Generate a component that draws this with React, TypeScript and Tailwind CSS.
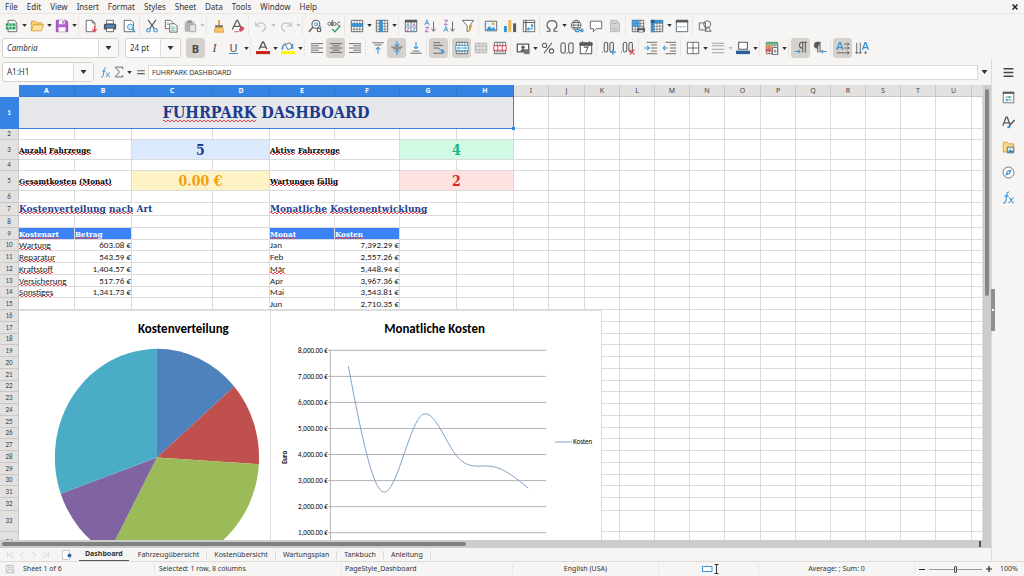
import { clsx } from 'clsx';
import type { ReactNode } from 'react';

const G = '#5b5b5b';
const B = '#3a93d2';

const alignLines = (rows: [number, number][]) =>
  rows.map(([x, w], i) => <path key={i} d={`M${x} ${3 + i * 2.5}h${w}`} stroke={G} />);

const gridIcon = (
  <>
    <path d="M1.5 1.5h13v13h-13z" fill="#fff" stroke={G} />
    <path d="M1.5 5h13M1.5 8.3h13M1.5 11.6h13M4.8 1.5v13M8 1.5v13M11.2 1.5v13" stroke={G} strokeWidth=".7" />
  </>
);

// all glyphs sit on a 16x16 grid
const icons: Record<string, ReactNode> = {
  new: (
    <>
      <path d="M3.5 1.5h7l3 3v10h-10z" fill="#fff" stroke={G} />
      <path d="M1 5h11v7H1z" fill="#2e9e62" />
      <path d="M1 8.5h11M4.5 5v7M8 5v7" stroke="#fff" strokeWidth=".8" />
    </>
  ),
  open: (
    <>
      <path d="M1.5 13.5v-11h5l1.5 2h5.5v2" fill="#f9d67a" stroke="#dd9a2e" />
      <path d="M1.5 13.5 4 6.5h11.5l-2.5 7z" fill="#fde3a0" stroke="#dd9a2e" />
    </>
  ),
  save: (
    <>
      <path d="M1.5 1.5h11l2 2v11h-13z" fill="#b261c9" stroke="#9245ab" />
      <path d="M4.5 1.5h6.5v4.500H4.5zM4 9.5h8v5H4z" fill="#fff" />
      <path d="M8.5 2.5h1.500v2.500H8.5z" fill="#9245ab" />
    </>
  ),
  pdf: (
    <>
      <path d="M2.5 1.5h7l3 3v10h-10z" fill="#fff" stroke={G} />
      <path d="M9.5 1.5v3h3" fill="none" stroke={G} />
      <path d="M12 8v6M9.5 11.5l2.500 3 2.500-3" fill="none" stroke="#e0475a" strokeWidth="1.300" />
    </>
  ),
  print: (
    <>
      <path d="M4 1.5h8v4H4z" fill="#fff" stroke={G} />
      <path d="M1 5.5h14v6.500H1z" fill="#555a5e" />
      <path d="M3.5 7h9v2.500h-9z" fill={B} />
      <path d="M4 10.5h8v4H4z" fill="#fff" stroke={G} />
    </>
  ),
  preview: (
    <>
      <path d="M2.5 1.5h8l2.500 2.500v10.500H2.5z" fill="#fff" stroke={G} />
      <circle cx="9.5" cy="9" r="3.2" fill="#d7ecfa" stroke={B} />
      <path d="m12 11.5 3 3.500" stroke={B} strokeWidth="1.5" />
    </>
  ),
  cut: (
    <>
      <path d="m3.5 1 7 10M12.5 1l-7 10" stroke={G} strokeWidth="1.3" />
      <circle cx="4" cy="12.8" r="2" fill="none" stroke={B} strokeWidth="1.3" />
      <circle cx="12" cy="12.8" r="2" fill="none" stroke={B} strokeWidth="1.3" />
    </>
  ),
  copy: (
    <>
      <path d="M1.5 1.5h6l2.500 2.500v7H1.5z" fill="#fff" stroke={G} />
      <path d="M6.5 5.5h6l2.500 2.500v7H6.5z" fill="#fff" stroke={G} />
      <path d="M8 9h5M8 11h5M8 13h5M3 4.5h3M3 6.5h3" stroke="#40a184" strokeWidth=".8" />
    </>
  ),
  paste: (
    <>
      <path d="M2 3h11v11.500H2z" fill="#b5b3b1" />
      <path d="M5 1.5h5v3H5z" fill="#8f8d8b" />
      <path d="M7.5 6.5h7v8h-7z" fill="#e4e3e1" stroke="#a5a3a1" />
    </>
  ),
  clone: (
    <>
      <path d="M8 1v6" stroke="#dd9a2e" strokeWidth="2" />
      <path d="M3.5 7h9v3h-9z" fill="#777" />
      <path d="M3.5 10h9l.5 5H3z" fill="#f7c876" stroke="#dd9a2e" />
    </>
  ),
  clear: (
    <>
      <path d="M1.5 12 6.5 1.5h1L12 11M3.5 8.5h7" fill="none" stroke={G} strokeWidth="1.5" />
      <path d="m9 12 3.500-4 3 2.500-3 3.500-2.500.5z" fill="#dc4458" />
      <path d="M4 14.5h5" stroke="#dc4458" />
    </>
  ),
  undo: <path d="M2 3v5h5M2.5 7.5C6 2.5 13 4 13 9c0 2.500-2 4.500-4 5.500" fill="none" stroke="#c4c2c0" strokeWidth="1.3" />,
  redo: <path d="M14 3v5H9M13.5 7.5C10 2.5 3 4 3 9c0 2.500 2 4.500 4 5.500" fill="none" stroke="#c4c2c0" strokeWidth="1.3" />,
  find: (
    <>
      <circle cx="9" cy="6" r="4.5" fill="#fff" stroke={G} strokeWidth="1.2" />
      <path d="m5.5 9.5-4.500 5" stroke={G} strokeWidth="1.6" />
      <circle cx="8.8" cy="6" r="1.6" fill="none" stroke={B} />
      <path d="M10.7 4v4M14.5 8v6.500" stroke={B} />
      <circle cx="12.5" cy="12.5" r="2" fill="none" stroke={G} strokeWidth="1.2" />
    </>
  ),
  spell: (
    <>
      <circle cx="2.8" cy="5.5" r="1.8" fill="none" stroke={G} />
      <path d="M5 3v5M6.5 1v7M15 4.2a2 2 0 1 0 0 2.800" fill="none" stroke={G} />
      <circle cx="8.6" cy="5.7" r="1.8" fill="none" stroke={G} />
      <path d="m6 11.5 3 3 6-6.500" fill="none" stroke="#2fa36b" strokeWidth="1.5" />
    </>
  ),
  row: (
    <>
      {gridIcon}
      <path d="M1 5h14v4H1z" fill={B} />
    </>
  ),
  column: (
    <>
      {gridIcon}
      <path d="M5 1h4v14H5z" fill={B} />
    </>
  ),
  sort: (
    <>
      <path d="M1.5 1.5h13v13h-13zM8 2v12" fill="#fff" stroke={G} />
      <path d="M1 1h14v3H1z" fill={G} />
      <path d="m3 9 1.500-4L6 9M10 10h3l-3 4h3" fill="none" stroke={B} />
      <path d="M3 10h3l-3 4h3M10 9l1.500-4L13 9" fill="none" stroke="#a857c0" />
    </>
  ),
  asc: (
    <>
      <path d="m2 7 2.500-6L7 7M3 5h3" fill="none" stroke={B} />
      <path d="M2.5 9.5h4l-4 5h4" fill="none" stroke="#a857c0" />
      <path d="M12 3v11M9.5 11l2.500 3 2.500-3" fill="none" stroke={G} />
    </>
  ),
  desc: (
    <>
      <path d="M2.5 1.5h4l-4 5h4" fill="none" stroke="#a857c0" />
      <path d="m2 14.5 2.500-6 2.500 6M3 12.5h3" fill="none" stroke={B} />
      <path d="M12 3v11M9.5 11l2.500 3 2.500-3" fill="none" stroke={G} />
    </>
  ),
  filter: (
    <>
      <path d="M1.5 1.5h13L10 7.5v5l-3 2v-7z" fill="#fff" stroke={G} />
      <path d="M12 6.5 9.5 14" stroke="#e5a33b" strokeWidth="1.8" />
    </>
  ),
  image: (
    <>
      <path d="M1.5 2.5h13v11h-13z" fill="#e6f3fc" stroke={G} />
      <path d="m2 13 4-5 3 3 2-2 3 4z" fill={B} />
      <circle cx="10.5" cy="5.5" r="1.5" fill="#e9a13a" />
    </>
  ),
  chart: (
    <>
      <path d="M1 8h3.500v7H1z" fill={B} />
      <path d="M6 1h3.500v14H6z" fill="#edb75b" />
      <path d="M11.5 5H15v10h-3.500z" fill={G} />
    </>
  ),
  pivot: (
    <>
      <path d="M1.5 1.5h13v13h-13z" fill="#fff" stroke={G} />
      <path d="M1.5 4h13M4.5 1.5v13" stroke={G} strokeWidth="1.4" />
      <path d="M6.5 11.5h5v-5M10 8l1.500-2L13 8M8 10l-2 1.500L8 13" fill="none" stroke={B} strokeWidth="1.2" />
    </>
  ),
  omega: <path d="M1.5 14h4.200v-2C3 10.5 2.3 8.5 2.3 6.8 2.3 3.8 4.8 1.8 8 1.8s5.700 2 5.700 5c0 1.700-.7 3.700-3.400 5.200v2h4.200" fill="none" stroke={G} strokeWidth="1.3" />,
  link: (
    <>
      <circle cx="7" cy="7" r="5.5" fill="#fff" stroke={G} />
      <path d="M1.5 7h11M7 1.5c-3.500 3-3.500 8 0 11M7 1.5c3.500 3 3.500 8 0 11M2.5 4h9M2.5 10h9" fill="none" stroke={G} />
      <path d="M8.5 11.5h-1a1.500 1.500 0 0 0 0 3h3M12 11.5h1.500a1.500 1.500 0 0 1 0 3H12M9.5 13h4" fill="none" stroke={B} strokeWidth="1.3" />
    </>
  ),
  comment: <path d="M1.5 2.5h13v8.500H8.5L5 14.5V11H1.5z" fill="#fff" stroke={G} />,
  headfoot: (
    <>
      <path d="M3 1.5h7l3 3v10H3z" fill="#d6d4d2" stroke="#b3b1af" />
      <path d="M5 5h5M5 11.5h6" stroke="#aaa" />
    </>
  ),
  printArea: (
    <>
      {gridIcon}
      <path d="M1 1h9v8H1z" fill={B} opacity=".85" />
      <path d="M7 10h9v4.500H7z" fill={G} />
      <path d="M9 8.5h5v2H9zM9 12.5h5V15H9z" fill="#e5f2fb" stroke={G} strokeWidth=".6" />
    </>
  ),
  freeze: (
    <>
      {gridIcon}
      <path d="M1 1h14v3.500H5V15H1z" fill={B} />
      <path d="M1 1h4v3.500H1z" fill="#1c5d91" />
    </>
  ),
  split: (
    <>
      <path d="M1.5 1.5h13v13h-13z" fill="#fff" stroke={G} />
      <path d="M1 1h14v3H1z" fill={G} />
      <path d="M3 9h10" stroke={B} strokeDasharray="2 1" />
    </>
  ),
  shapes: (
    <>
      <path d="M1.5 4.5h7v8h-7z" fill="none" stroke={G} />
      <circle cx="10.5" cy="6" r="4" fill="none" stroke={G} />
      <path d="m8 14 3.500-5 3.500 5z" fill="#f6f5f4" stroke={G} />
    </>
  ),
  fontColor: (
    <>
      <path d="m3.5 9.5 4-8.500h1l4 8.500M5 7h6" fill="none" stroke={G} strokeWidth="1.6" />
      <path d="M0 11.5h16V15H0z" fill="#c9211e" />
    </>
  ),
  highlight: (
    <>
      <path d="m5 4 5-2 3 5-5 3z" fill="#fff" stroke={G} />
      <path d="M1.5 10c0-4 1-6 4-7M13 3v6" fill="none" stroke={B} strokeWidth="1.8" />
      <path d="M0 11.5h16V15H0z" fill="#fdf600" />
    </>
  ),
  left: alignLines([[1, 14], [1, 9], [1, 14], [1, 9], [1, 14]]),
  center: alignLines([[1, 14], [4, 8], [1, 14], [4, 8], [1, 14]]),
  right: alignLines([[1, 14], [6, 9], [1, 14], [6, 9], [1, 14]]),
  top: (
    <>
      <path d="M1.5 2h13M4 4.5h8" stroke={G} />
      <path d="M8 14.5V7M5.5 9.5 8 7l2.500 2.500" fill="none" stroke={B} strokeWidth="1.2" />
    </>
  ),
  middle: (
    <>
      <path d="M1.5 7h13M3.5 9h9" stroke={G} />
      <path d="M8 0v5.500M5.5 3.5 8 6l2.500-2.500M8 16v-5.500M5.5 12.5 8 10l2.500 2.500" fill="none" stroke={B} strokeWidth="1.2" />
    </>
  ),
  bottom: (
    <>
      <path d="M4 11.5h8M1.5 14h13" stroke={G} />
      <path d="M8 1v8M5.5 6.5 8 9l2.500-2.500" fill="none" stroke={B} strokeWidth="1.2" />
    </>
  ),
  wrap: (
    <>
      <path d="M1.5 2h8M1.5 5h11M1.5 8h5M1.5 14h11" stroke={G} />
      <path d="M6 8c4 0 3 4 7.500 4.500M11.5 9.5l2.500 3-3.500 1" fill="none" stroke={B} strokeWidth="1.2" />
    </>
  ),
  merge: (
    <>
      {gridIcon}
      <path d="M1 5h14v6H1z" fill="#fff" stroke={B} />
      <path d="M3 8h10M5 6.5 3 8l2 1.500M11 6.5 13 8l-2 1.500" fill="none" stroke={B} />
    </>
  ),
  mergeCells: <path d="M1.5 2.5h13v11h-13zM1.5 6h13M1.5 10h13M6 2.5V6M10 2.5V6M6 10v3.500M10 10v3.500" fill="#e1dfdd" stroke="#b1afad" />,
  unmerge: (
    <>
      {gridIcon}
      <path d="M1 5.5h14v5H1zM5.5 5.5v5M10.5 5.5v5" fill="#fff" stroke="#d8394a" />
    </>
  ),
  currency: (
    <>
      <path d="M1.5 3.5h13v9h-13z" fill="#fff" stroke={G} strokeWidth="1.5" />
      <circle cx="8" cy="7" r="2" fill={G} />
      <path d="M5 12c0-4 6-4 6 0z" fill={G} />
      <path d="M9 9.5h6.500V15H9z" fill="#77736f" />
    </>
  ),
  percent: (
    <>
      <path d="M12.5 2 3.5 14" stroke={G} strokeWidth="1.2" />
      <circle cx="4" cy="5" r="2.5" fill="none" stroke={G} strokeWidth="1.2" />
      <circle cx="12" cy="11.5" r="2.5" fill="none" stroke={G} strokeWidth="1.2" />
    </>
  ),
  number: (
    <>
      <rect x="1" y="2" width="5" height="12" rx="2.5" fill="none" stroke={G} strokeWidth="1.2" />
      <rect x="10" y="2" width="5" height="12" rx="2.5" fill="none" stroke={G} strokeWidth="1.2" />
      <path d="M7.5 13h1.200v1.500H7.5z" fill={G} />
    </>
  ),
  date: (
    <>
      <path d="M1.5 2.5h13v12h-13z" fill="#fff" stroke={G} strokeWidth="1.2" />
      <path d="M1 2h14v3H1zM4 0v2M12 0v2" fill={G} stroke={G} />
      <path d="M5.5 7h5L7.5 13" fill="none" stroke={G} strokeWidth="1.2" />
    </>
  ),
  addDecimal: (
    <>
      <rect x="2.5" y="1.5" width="4" height="11" rx="2" fill="none" stroke={G} strokeWidth="1.2" />
      <rect x="9" y="1.5" width="4" height="11" rx="2" fill="none" stroke={G} strokeWidth="1.2" />
      <path d="M0 12h1v1H0z" fill={G} />
      <path d="M12.5 9.5V16M9.5 12.7H16" stroke={B} strokeWidth="1.3" />
    </>
  ),
  removeDecimal: (
    <>
      <rect x="2.5" y="1.5" width="4" height="11" rx="2" fill="none" stroke={G} strokeWidth="1.2" />
      <rect x="9" y="1.5" width="4" height="11" rx="2" fill="none" stroke={G} strokeWidth="1.2" />
      <path d="M0 12h1v1H0z" fill={G} />
      <path d="m10 10 5.500 5.500m0-5.500L10 15.5" stroke="#e0475a" strokeWidth="1.3" />
    </>
  ),
  indent: (
    <>
      <path d="M3 1.5h12M8 4.5h7M8 8h7M8 11.5h7M3 14.5h12" stroke={G} />
      <path d="M0 8h5.500M3.5 5.5 6 8l-2.500 2.500" fill="none" stroke={B} strokeWidth="1.2" />
    </>
  ),
  outdent: (
    <>
      <path d="M3 1.5h12M8 4.5h7M8 8h7M8 11.5h7M3 14.5h12" stroke={G} />
      <path d="M.5 8H6M2.5 5.5 0 8l2.500 2.500" fill="none" stroke={B} strokeWidth="1.2" />
    </>
  ),
  borders: <path d="M1.5 1.5h13v13h-13zM8 1.5v13M1.5 8h13" fill="#fff" stroke={G} />,
  lineStyle: <path d="M1 2.5h14M1 5.5h14M1 9.5h14M1 13.5h14" stroke="#a3a19f" strokeWidth="1.2" />,
  borderColor: (
    <>
      <path d="M3 1.5h10v8H3z" fill="#fff" stroke={G} strokeWidth="1.2" />
      <path d="M0 11h16v4H0z" fill="#2a6099" />
    </>
  ),
  conditional: (
    <>
      {gridIcon}
      <path d="M1 1.5h13v2.500H1z" fill="#59b578" />
      <path d="M1 5h6v3.500H1z" fill="#ea8c55" />
      <path d="M1 9h6v3H1z" fill="#dd5863" />
      <path d="M8.5 7.5h6v8h-6z" fill="#fff" stroke={G} />
      <path d="M10 10.5h3M10 12.5h3" stroke={G} />
    </>
  ),
  ltr: (
    <>
      <path d="M15 1.5H9.5a3 3 0 0 0 0 6.500M10 1.5V13M13 1.5V13" fill="none" stroke={G} strokeWidth="1.2" />
      <path d="M1 12h6M5 10l2 2-2 2" fill="none" stroke={B} strokeWidth="1.2" />
    </>
  ),
  rtl: (
    <>
      <path d="M8.5 1.5H5A3 3 0 0 0 5 8M5.5 1.5V13M8 1.5V13" fill={G} stroke={G} strokeWidth="1.2" />
      <path d="M15.5 12h-6M11.5 10l-2 2 2 2" fill="none" stroke={B} strokeWidth="1.2" />
    </>
  ),
  textLr: (
    <>
      <path d="M1 10 4 2h1l3 8M2.5 7.5h4" fill="none" stroke={B} strokeWidth="1.5" />
      <path d="M9.5 3.5H15M9.5 8H15M1 13.5h14M13 2l2 1.500L13 5M13 6.5 15 8l-2 1.500M13 12l2 1.500-2 1.500" fill="none" stroke={G} />
    </>
  ),
  textTb: (
    <>
      <path d="m8.5 10 3-8h.8l3 8M9.8 7.5h4.200" fill="none" stroke={B} strokeWidth="1.5" />
      <path d="M2 2v12.500M6 2v12.500M12 11.5v3M.5 12.5l1.500 2 1.500-2M4.5 12.5l1.500 2 1.500-2M10.5 13l1.500 1.500 1.500-1.500" fill="none" stroke={G} />
    </>
  ),
  fx: (
    <>
      <path d="M9 1.5C6.5.5 6.2 2.5 5.8 5l-1 7c-.4 2.500-1.500 3-3.300 2.300M3 6h5" fill="none" stroke={B} strokeWidth="1.4" />
      <path d="M8.5 8c2 0 3.500 6.500 6 6.500M14.5 8c-2 0-4 6.500-6.500 6.500" fill="none" stroke={B} strokeWidth="1.3" />
    </>
  ),
  sigma: <path d="M13 4V1.5H3L8.5 8 3 14.5h10V12" fill="none" stroke={G} strokeWidth="1.2" />,
  equals: <path d="M2 6h12M2 10.5h12" stroke={G} strokeWidth="1.8" />,
  menu: <path d="M2 3.5h12M2 8h12M2 12.5h12" stroke="#444" strokeWidth="1.8" />,
  properties: (
    <>
      <path d="M1.5 1.5h13v13h-13z" fill="#fff" stroke={G} />
      <path d="M1 1h14v2.500H1z" fill={G} />
      <path d="M4 7.5h8M4 11h8" stroke="#2f9a7d" />
      <path d="M9 6v3M6 9.5v3" stroke={B} strokeWidth="1.5" />
    </>
  ),
  styles: (
    <>
      <path d="M1 12 5 1.5h1.500L10 11M2.5 8.5H9" fill="none" stroke={G} strokeWidth="1.6" />
      <path d="M15.5 5 9 12" stroke={G} strokeWidth="2" />
      <path d="M6.5 15c0-3 1.500-4 3.500-3s-.5 3.500-3.500 3z" fill={B} />
    </>
  ),
  gallery: (
    <>
      <path d="M1.5 13.5v-12h5l1.500 2h6.500v10z" fill="#fbd68c" stroke="#dd9a2e" />
      <path d="M6.5 7.5h8v7h-8z" fill="#d5ebf9" stroke={G} />
      <path d="m7 14 3-3.500 2 2 2-1.500v3z" fill="#2c79b6" />
    </>
  ),
  navigator: (
    <>
      <circle cx="8" cy="8" r="6.7" fill="#fff" stroke={G} />
      <path d="M12 4 9.8 9.8 4 12l2.200-5.800z" fill={B} />
      <circle cx="8" cy="8" r="1.2" fill="#fff" />
    </>
  ),
  disk: <path d="M2 2h10l2 2v10H2zM5 2v4h6V2M4.5 14V9h7v5" fill="none" stroke="#a5a3a1" />,
};

function Icon({ name, size = 'size-[14px]' }: { name: string; size?: string }) {
  return (
    <svg viewBox="0 0 16 16" className={clsx('shrink-0', size)} aria-hidden="true">
      {icons[name]}
    </svg>
  );
}

function Caret({ dim, big }: { dim?: boolean; big?: boolean }) {
  return (
    <svg
      viewBox="0 0 6 4"
      className={clsx(big ? 'h-[4px] w-[7px]' : 'h-[3px] w-[5px]', dim ? 'text-[#c4c2c0]' : 'text-[#333]')}
      aria-hidden="true"
    >
      <path d="M0 0h6L3 4z" fill="currentColor" />
    </svg>
  );
}

type Tool = { icon?: string; text?: ReactNode; label: string; caret?: boolean; on?: boolean; dim?: boolean } | null;

const standardTools: Tool[] = [
  { icon: 'new', label: 'New', caret: true },
  { icon: 'open', label: 'Open', caret: true },
  { icon: 'save', label: 'Save', caret: true },
  null,
  { icon: 'pdf', label: 'Export as PDF' },
  { icon: 'print', label: 'Print' },
  { icon: 'preview', label: 'Print Preview' },
  null,
  { icon: 'cut', label: 'Cut' },
  { icon: 'copy', label: 'Copy' },
  { icon: 'paste', label: 'Paste', caret: true, dim: true },
  null,
  { icon: 'clone', label: 'Clone Formatting' },
  { icon: 'clear', label: 'Clear Formatting' },
  null,
  { icon: 'undo', label: 'Undo', caret: true, dim: true },
  { icon: 'redo', label: 'Redo', caret: true, dim: true },
  null,
  { icon: 'find', label: 'Find & Replace' },
  { icon: 'spell', label: 'Spelling' },
  null,
  { icon: 'row', label: 'Row', caret: true },
  { icon: 'column', label: 'Column', caret: true },
  null,
  { icon: 'sort', label: 'Sort' },
  { icon: 'asc', label: 'Sort Ascending' },
  { icon: 'desc', label: 'Sort Descending' },
  { icon: 'filter', label: 'AutoFilter' },
  null,
  { icon: 'image', label: 'Insert Image' },
  { icon: 'chart', label: 'Insert Chart' },
  { icon: 'pivot', label: 'Pivot Table' },
  null,
  { icon: 'omega', label: 'Special Character', caret: true },
  { icon: 'link', label: 'Hyperlink' },
  { icon: 'comment', label: 'Comment' },
  { icon: 'headfoot', label: 'Headers and Footers' },
  null,
  { icon: 'printArea', label: 'Define Print Area' },
  { icon: 'freeze', label: 'Freeze Rows and Columns', caret: true },
  { icon: 'split', label: 'Split Window' },
  null,
  { icon: 'shapes', label: 'Draw Functions' },
];

const formatTools: Tool[] = [
  { text: <b>B</b>, label: 'Bold', on: true },
  { text: <i className="font-['Liberation_Serif',serif] text-[12px]">I</i>, label: 'Italic' },
  { text: <span className="border-b border-[#3a93d2] leading-[11px]">U</span>, label: 'Underline', caret: true },
  null,
  { icon: 'fontColor', label: 'Font Color', caret: true },
  { icon: 'highlight', label: 'Background Color', caret: true },
  null,
  { icon: 'left', label: 'Align Left' },
  { icon: 'center', label: 'Center Horizontally', on: true },
  { icon: 'right', label: 'Align Right' },
  null,
  { icon: 'top', label: 'Align Top' },
  { icon: 'middle', label: 'Center Vertically', on: true },
  { icon: 'bottom', label: 'Align Bottom' },
  null,
  { icon: 'wrap', label: 'Wrap Text', on: true },
  null,
  { icon: 'merge', label: 'Merge and Center Cells', on: true },
  { icon: 'mergeCells', label: 'Merge Cells' },
  { icon: 'unmerge', label: 'Unmerge Cells' },
  null,
  { icon: 'currency', label: 'Format as Currency', caret: true },
  { icon: 'percent', label: 'Format as Percent' },
  { icon: 'number', label: 'Format as Number' },
  { icon: 'date', label: 'Format as Date' },
  null,
  { icon: 'addDecimal', label: 'Add Decimal Place' },
  { icon: 'removeDecimal', label: 'Delete Decimal Place' },
  null,
  { icon: 'indent', label: 'Increase Indent' },
  { icon: 'outdent', label: 'Decrease Indent' },
  null,
  { icon: 'borders', label: 'Borders', caret: true },
  { icon: 'lineStyle', label: 'Border Style', caret: true, dim: true },
  { icon: 'borderColor', label: 'Border Color', caret: true },
  null,
  { icon: 'conditional', label: 'Conditional', caret: true },
  null,
  { icon: 'ltr', label: 'Left-To-Right', on: true },
  { icon: 'rtl', label: 'Right-To-Left' },
  null,
  { icon: 'textLr', label: 'Text direction from left to right', on: true },
  { icon: 'textTb', label: 'Text direction from top to bottom' },
];

function Tools({ tools }: { tools: Tool[] }) {
  return tools.map((tool, i) =>
    tool ? (
      <div key={i} className="flex shrink-0 items-center">
        <button
          type="button"
          aria-label={tool.label}
          className={clsx(
            'flex h-5 w-[19px] items-center justify-center rounded-[3px] text-[11px] leading-none text-[#4a4a4a]',
            tool.on && 'bg-[#d5d1cd]',
          )}
        >
          {tool.icon ? <Icon name={tool.icon} /> : tool.text}
        </button>
        {tool.caret && (
          <button type="button" aria-label={`${tool.label} options`} className="flex h-5 w-1.5 items-center justify-center">
            <Caret dim={tool.dim} />
          </button>
        )}
      </div>
    ) : (
      <div key={i} className="mx-px h-5 w-0.5 shrink-0 border-l border-[#e9e7e5]" />
    ),
  );
}

function Combo({ label, value, className, italic }: { label: string; value: string; className: string; italic?: boolean }) {
  return (
    <div className={clsx('flex h-5 shrink-0 overflow-hidden rounded-[3px] border border-[#d5d1cd] bg-white', className)}>
      <input aria-label={label} defaultValue={value} className={clsx('min-w-0 flex-1 pl-1 text-[8px] outline-none', italic && 'italic')} />
      <button type="button" aria-label={`${label} list`} className="flex w-5 items-center justify-center border-l border-[#dedbd8] bg-[#f9f8f7]">
        <Caret big />
      </button>
    </div>
  );
}

const columns: [string, number][] = [
  ['A', 56], ['B', 57], ['C', 81], ['D', 57], ['E', 65], ['F', 65], ['G', 57], ['H', 57],
  ['I', 35], ['J', 36], ['K', 35], ['L', 35], ['M', 35], ['N', 35], ['O', 36],
  ['P', 35], ['Q', 35], ['R', 35], ['S', 35], ['T', 35], ['U', 36],
];

const rowHeights = [
  32, 11, 20, 11, 20, 12, 13, 12, 12, 11, 12, 12, 12, 11, 12, 12, 12,
  11, 12, 12, 12, 11, 12, 12, 12, 11, 12, 12, 12, 11, 12, 13, 21, 20,
];

type Cell = { text: string; span?: number; className?: string };

const serif = "font-['DejaVu_Serif_Condensed','DejaVu_Serif',serif] font-bold";
const label = `${serif} text-[8px] text-black`;
const kpi = `${serif} text-[14px] leading-[18px] text-center`;
const heading = `${serif} text-[10px] leading-[12px] text-[#27408f]`;
const tableHead = `${serif} text-[8px] bg-[#3b82f6] text-white`;

const cells: Record<string, Cell> = {
  A1: { text: 'FUHRPARK DASHBOARD', span: 8, className: `${serif} text-[16px] leading-[30px] bg-[#e5e7eb] text-center text-[#1e3a8a]` },
  A3: { text: 'Anzahl Fahrzeuge', span: 2, className: label },
  C3: { text: '5', span: 2, className: `${kpi} bg-[#dbeafe] text-[#1e3a8a]` },
  E3: { text: 'Aktive Fahrzeuge', span: 2, className: label },
  G3: { text: '4', span: 2, className: `${kpi} bg-[#d1fae5] text-[#10b981]` },
  A5: { text: 'Gesamtkosten (Monat)', span: 2, className: label },
  C5: { text: '0.00 €', span: 2, className: `${kpi} bg-[#fef3c7] text-[#f59e0b]` },
  E5: { text: 'Wartungen fällig', span: 2, className: label },
  G5: { text: '2', span: 2, className: `${kpi} bg-[#fee2e2] text-[#dc2626]` },
  A7: { text: 'Kostenverteilung nach Art', span: 3, className: heading },
  E7: { text: 'Monatliche Kostenentwicklung', span: 3, className: heading },
  A9: { text: 'Kostenart', className: tableHead },
  B9: { text: 'Betrag', className: tableHead },
  E9: { text: 'Monat', className: tableHead },
  F9: { text: 'Kosten', className: tableHead },
};

const costs: [string, number][] = [
  ['Wartung', 603.08],
  ['Reparatur', 543.59],
  ['Kraftstoff', 1404.57],
  ['Versicherung', 517.76],
  ['Sonstiges', 1341.73],
];
const months: [string, number][] = [
  ['Jan', 7392.29],
  ['Feb', 2557.26],
  ['Mär', 5448.94],
  ['Apr', 3967.36],
  ['Mai', 3543.81],
  ['Jun', 2710.35],
];

const euro = (n: number) => `${n.toLocaleString('en-US', { minimumFractionDigits: 2, maximumFractionDigits: 2 })} €`;

costs.forEach(([name, value], i) => {
  cells[`A${10 + i}`] = { text: name };
  cells[`B${10 + i}`] = { text: euro(value), className: 'text-right' };
});
months.forEach(([name, value], i) => {
  cells[`E${10 + i}`] = { text: name };
  cells[`F${10 + i}`] = { text: euro(value), className: 'text-right' };
});

const knownWords = ['DASHBOARD', 'Art', 'Jan', 'Feb', 'Apr', 'Mai', 'Jun'];

// two 1px rows of dashes, half a period apart, make the spell-check zigzag
const squiggle =
  'bg-[image:linear-gradient(90deg,#e0474c_50%,transparent_50%),linear-gradient(90deg,transparent_50%,#e0474c_50%)] bg-[length:4px_1px] bg-[position:0_calc(100%-1px),0_100%] bg-repeat-x';

function CellText({ text }: { text: string }) {
  return text.split(' ').map((word, i) => (
    <span key={i}>
      {i > 0 && ' '}
      <span className={clsx(/\p{L}{3}/u.test(word) && !knownWords.includes(word) && squiggle)}>{word}</span>
    </span>
  ));
}

function Row({ index, height }: { index: number; height: number }) {
  const tds: ReactNode[] = [];
  for (let c = 0; c <= columns.length; c++) {
    const cell = columns[c] && cells[`${columns[c][0]}${index}`];
    const span = cell?.span ?? 1;
    tds.push(
      <td
        key={c}
        colSpan={span}
        className={clsx(
          'border-r border-b p-0 align-middle whitespace-nowrap',
          index === 1 && c === 0 ? 'relative border-[#3584e4]' : 'border-[#dcdcdc]',
          cell?.className,
        )}
      >
        {cell && (
          <div className={clsx(index === 9 && 'h-[11px] overflow-hidden leading-[13px]')}>
            <CellText text={cell.text} />
          </div>
        )}
        {index === 1 && c === 0 && <span className="absolute -right-0.5 -bottom-0.5 size-[3px] bg-[#3584e4]" />}
      </td>,
    );
    c += span - 1;
  }

  return (
    <tr style={{ height }}>
      <th
        className={clsx(
          'border-r border-b p-0 text-[7px] leading-[10px]',
          index === 1 ? 'border-[#3584e4] bg-[#3584e4] font-bold text-white' : 'border-[#c9c8c6] bg-[#e2e1df] font-normal text-[#444]',
        )}
      >
        {index}
      </th>
      {tds}
    </tr>
  );
}

const pieColors = ['#4f81bd', '#c0504d', '#9bbb59', '#8064a2', '#4bacc6'];

function PieChart() {
  const total = costs.reduce((sum, [, value]) => sum + value, 0);
  const point = (part: number) => {
    const angle = part * 2 * Math.PI;
    return `${138.5 + 102.5 * Math.sin(angle)} ${147 - 109 * Math.cos(angle)}`;
  };
  let start = 0;

  return (
    <svg viewBox="0 0 252 262" className="h-[262px] w-[252px] border-t border-r border-[#dcdcdc] bg-white" role="img" aria-label="Kostenverteilung">
      <text x="165" y="22" textAnchor="middle" className="text-[13px] font-bold">
        Kostenverteilung
      </text>
      {costs.map(([name, value], i) => {
        const end = start + value / total;
        const d = `M138.5 147L${point(start)}A102.5 109 0 0 1 ${point(end)}Z`;
        start = end;
        return <path key={name} d={d} fill={pieColors[i]} />;
      })}
    </svg>
  );
}

function LineChart() {
  return (
    <svg viewBox="0 1 331 262" className="h-[262px] w-[331px] border-t border-r border-[#dcdcdc] bg-white" role="img" aria-label="Monatliche Kosten">
      <text x="164" y="23" textAnchor="middle" className="text-[13px] font-bold">
        Monatliche Kosten
      </text>
      {[8, 7, 6, 5, 4, 3, 2, 1].map((k, i) => (
        <g key={k}>
          <path d={`M57 ${40.5 + i * 26.15}H276`} stroke="#b3b3b3" />
          <text x="57" y={43 + i * 26.15} textAnchor="end" className="text-[7px]">
            {euro(k * 1000)}
          </text>
        </g>
      ))}
      <path d="M59.5 40v210" stroke="#b3b3b3" />
      <text transform="translate(16 148) rotate(-90)" textAnchor="middle" className="text-[7px] font-bold">
        Euro
      </text>
      <path
        d="M77.5 56.4C89.5 119.5 101.6 182.7 113.6 182.8C125.6 182.9 137.7 120.1 149.7 107C161.7 93.9 173.8 130.7 185.8 146C197.8 161.3 209.9 155.1 221.9 157C233.9 158.9 246 168.8 258 178.8"
        fill="none"
        stroke="#7ea3c8"
      />
      <path d="M285 132.500h17" stroke="#7ea3c8" />
      <text x="303" y="135" className="text-[7px]">
        Kosten
      </text>
    </svg>
  );
}

function Sheet() {
  return (
    <div className="relative min-w-0 flex-1 overflow-hidden bg-white font-['Carlito','Lato',sans-serif]">
      <table className="w-full table-fixed border-separate border-spacing-0 text-[9px] leading-[10px] text-[#222]">
        <colgroup>
          <col className="w-[19px]" />
          {columns.map(([name, width]) => (
            <col key={name} style={{ width }} />
          ))}
          <col />
        </colgroup>
        <thead className="font-['Noto_Sans',sans-serif] text-[7px]">
          <tr className="h-3">
            <th className="bg-[#f6f5f4] p-0" />
            {columns.map(([name], i) => (
              <th
                key={name}
                className={clsx(
                  'border-r border-b p-0 leading-[10px]',
                  i < 8 ? 'border-[#2f78d0] bg-[#3584e4] font-bold text-white' : 'border-[#c9c8c6] bg-[#e2e1df] font-normal text-[#444]',
                )}
              >
                {name}
              </th>
            ))}
            <th className="border-b border-[#c9c8c6] bg-[#e2e1df] p-0" />
          </tr>
        </thead>
        <tbody>
          {rowHeights.map((height, i) => (
            <Row key={i} index={i + 1} height={height} />
          ))}
        </tbody>
      </table>
      <div className="absolute top-[225px] left-[19px] flex">
        <PieChart />
        <LineChart />
      </div>
    </div>
  );
}

const menus = ['File', 'Edit', 'View', 'Insert', 'Format', 'Styles', 'Sheet', 'Data', 'Tools', 'Window', 'Help'];
const tabs = ['Dashboard', 'Fahrzeugübersicht', 'Kostenübersicht', 'Wartungsplan', 'Tankbuch', 'Anleitung'];

export default function App() {
  return (
    <div className="flex h-screen flex-col overflow-hidden bg-[#f6f5f4] font-['Noto_Sans',sans-serif] text-[8px] text-[#333]">
      <nav className="flex h-[14px] shrink-0 items-center gap-[9px] border-b border-[#e9e7e5] pr-1.5 pl-[5px]">
        {menus.map((menu) => (
          <button key={menu} type="button" className="leading-3">
            {menu}
          </button>
        ))}
        <button type="button" aria-label="Close" className="ml-auto">
          <svg viewBox="0 0 6 6" className="size-[6px]">
            <path d="m.5.5 5 5m0-5-5 5" stroke="#222" strokeWidth="1.5" />
          </svg>
        </button>
      </nav>

      <div className="flex h-[23px] shrink-0 items-center px-0.5">
        <Tools tools={standardTools} />
      </div>
      <div className="flex h-[22px] shrink-0 items-center px-0.5">
        <Combo label="Font Name" value="Cambria" className="mr-1.5 w-[117px]" italic />
        <Combo label="Font Size" value="24 pt" className="mr-[5px] w-14" />
        <Tools tools={formatTools} />
      </div>

      <div className="flex min-h-0 flex-1">
        <main className="flex min-w-0 flex-1 flex-col">
          <div className="flex h-[26px] shrink-0 items-center">
            <Combo label="Name Box" value="A1:H1" className="ml-0.5 w-[92px]" />
            <button type="button" aria-label="Function Wizard" className="ml-1.5">
              <Icon name="fx" size="size-[11px]" />
            </button>
            <button type="button" aria-label="Select Function" className="ml-0.5 flex items-center gap-0.5">
              <Icon name="sigma" size="size-[12px]" />
              <Caret />
            </button>
            <button type="button" aria-label="Formula" className="ml-1">
              <Icon name="equals" size="size-[10px]" />
            </button>
            <input
              aria-label="Input line"
              defaultValue="FUHRPARK DASHBOARD"
              className="ml-0.5 h-[15px] min-w-0 flex-1 border border-[#dedbd8] bg-white px-[3px] text-[7px] outline-none"
            />
            <button type="button" aria-label="Expand Formula Bar" className="flex w-[13px] items-center justify-center">
              <Caret big />
            </button>
          </div>

          <div className="flex min-h-0 flex-1">
            <Sheet />
            <div className="flex w-2 shrink-0 justify-center bg-[#cdcdcd] pt-1">
              <div className="h-[207px] w-1 rounded-full bg-[#858685]" />
            </div>
          </div>

          <div className="flex h-2 shrink-0 items-center justify-between bg-[#cdcdcd] pr-2.5 pl-0.5">
            <div className="h-1 w-[464px] rounded-full bg-[#7f807f]" />
            <div className="h-1.5 w-0.5 bg-[#555]" />
          </div>

          <div className="flex h-[13px] shrink-0 items-stretch text-[7px]">
            <div className="flex w-[79px] items-center gap-1 pl-1.5 text-[#d3d1cf]">
              {['M2 1v8M9 1 4 5l5 4', 'M7 1 3 5l4 4', 'M3 1l4 4-4 4', 'M1 1l5 4-5 4M8 1v8'].map((d) => (
                <button key={d} type="button" aria-label="Scroll sheets">
                  <svg viewBox="0 0 10 10" className="size-2">
                    <path d={d} fill="none" stroke="currentColor" />
                  </svg>
                </button>
              ))}
              <button type="button" aria-label="Add sheet" className="ml-2">
                <svg viewBox="0 0 10 10" className="size-2.5">
                  <path d="M.5.5h7v9h-7z" fill="#fff" stroke="#ccc" />
                  <circle cx="7.5" cy="5.5" r="2" fill="#2c6fa8" />
                </svg>
              </button>
            </div>
            {tabs.map((tab, i) => (
              <div key={tab} className="flex items-center">
                <button
                  type="button"
                  className={clsx('h-full leading-3', i === 0 ? 'mr-0.5 border-b border-[#555] px-1.5 font-bold' : 'px-[7px]')}
                >
                  {tab}
                </button>
                {i > 0 && <div className="h-2 w-px bg-[#dad8d6]" />}
              </div>
            ))}
          </div>
        </main>

        <aside className="relative flex w-[33px] shrink-0 flex-col items-center gap-3 border-l border-[#dddbd9] pt-[7px]">
          {['menu', 'properties', 'styles', 'gallery', 'navigator', 'fx'].map((name) => (
            <button key={name} type="button" aria-label={name} className="size-[13px]">
              <Icon name={name} size="size-[13px]" />
            </button>
          ))}
          <div className="absolute top-[230px] -left-px flex h-[42px] w-[4px] items-center justify-center bg-[#8e908f]">
            <div className="size-0.5 bg-white" />
          </div>
        </aside>
      </div>

      <footer className="flex h-[15px] shrink-0 items-center border-t border-[#dddbd9] text-[7px]">
        <div className="flex w-[154px] items-center gap-2 pl-[5px]">
          <Icon name="disk" size="size-[10px]" />
          <span>Sheet 1 of 6</span>
        </div>
        <span className="w-[187px] border-l border-[#e9e7e5] pl-1">Selected: 1 row, 8 columns</span>
        <span className="w-[171px] border-l border-[#e9e7e5] pl-[3px]">PageStyle_Dashboard</span>
        <span className="flex-1 border-l border-[#e9e7e5] text-center">English (USA)</span>
        <div className="flex w-[100px] items-center gap-1 border-l border-[#e9e7e5] pl-[43px]">
          <svg viewBox="0 0 17 10" className="h-2.5 w-[17px]">
            <path d="M.5 2.5h9.500v5H.5z" fill="#fff" stroke={B} />
            <path d="M12.5.5h4m-4 9h4m-2-9v9" stroke="#333" />
          </svg>
        </div>
        <span className="w-[156px] border-l border-[#e9e7e5] text-center">Average: ; Sum: 0</span>
        <div className="flex w-[110px] items-center gap-1 border-l border-[#e9e7e5] pl-1">
          <button type="button" aria-label="Zoom out" className="h-px w-1.5 bg-[#222]" />
          <input
            type="range"
            aria-label="Zoom"
            className="h-2 w-[53px] appearance-none bg-[linear-gradient(#999,#999)] bg-[length:100%_1px] bg-center bg-no-repeat [&::-webkit-slider-thumb]:h-[7px] [&::-webkit-slider-thumb]:w-[3px] [&::-webkit-slider-thumb]:appearance-none [&::-webkit-slider-thumb]:rounded-[1px] [&::-webkit-slider-thumb]:border [&::-webkit-slider-thumb]:border-[#555] [&::-webkit-slider-thumb]:bg-[#ddd]"
          />
          <button type="button" aria-label="Zoom in" className="flex size-1.5 items-center">
            <svg viewBox="0 0 6 6" className="size-[6px]">
              <path d="M3 0v6M0 3h6" stroke="#222" strokeWidth="1.2" />
            </svg>
          </button>
          <span className="ml-1">100%</span>
        </div>
      </footer>
    </div>
  );
}
